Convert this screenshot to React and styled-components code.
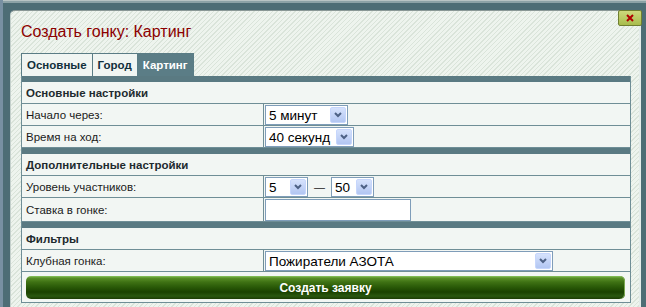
import React from "react";
import styled, { createGlobalStyle } from "styled-components";

const GlobalStyle = createGlobalStyle`
  html, body {
    margin: 0;
    padding: 0;
    background: #4d6d75;
  }
  body {
    font-family: "Liberation Sans", Arial, sans-serif;
  }
`;

const Frame = styled.div`
  position: relative;
  width: 646px;
  height: 307px;
  overflow: hidden;
  box-sizing: border-box;
  padding: 10px 5px 0 10px;
  background: linear-gradient(to right, #7890a2 0 3px, transparent 3px),
    linear-gradient(#b8c4c4 0 1px, #8ca2a6 1px 3px, #4d6d75 3px);
`;

const Panel = styled.div`
  height: 100%;
  box-sizing: border-box;
  border-top: 1px solid #8a9896;
  border-left: 1px solid #c4d0cc;
  border-right: 2px solid #e4ecea;
  border-top-left-radius: 5px;
  padding: 0 8px 0 10px;
  background: repeating-linear-gradient(
    135deg,
    #eef4ee 0 2.2px,
    #dae4da 2.2px 3.2px
  );
`;

const CloseButton = styled.div`
  position: absolute;
  top: 10px;
  right: 4px;
  width: 24px;
  height: 16px;
  box-sizing: border-box;
  border: 1px solid #6f7f30;
  border-radius: 2px;
  background: linear-gradient(#cdd87c, #a8bc4c);
  display: flex;
  align-items: center;
  justify-content: center;
`;

const Title = styled.h1`
  margin: 0;
  padding-top: 11px;
  height: 42px;
  box-sizing: border-box;
  font: normal 16px/19px "Liberation Sans", Arial, sans-serif;
  color: #8c0000;
`;

const Tabs = styled.div`
  display: flex;
  height: 23px;
`;

const Tab = styled.div`
  display: flex;
  align-items: center;
  padding: 0 5px;
  box-sizing: border-box;
  border: 1px solid #5a7c85;
  border-bottom: none;
  margin-right: -1px;
  font: bold 11.5px "Liberation Sans", Arial, sans-serif;
  background: ${({ active }) => (active ? "#5b7d86" : "#f0f5f2")};
  color: ${({ active }) => (active ? "#ffffff" : "#12303c")};
`;

const Table = styled.div`
  width: 610px;
  box-sizing: border-box;
  background: #f2f6f3;
  border: 1px solid #6f8e96;
  border-top: none;
`;

const SectionBar = styled.div`
  height: 6px;
  background: #5a7a82;
`;

const SectionHead = styled.div`
  height: 21px;
  display: flex;
  align-items: center;
  padding-left: 4px;
  border-bottom: 1px solid #6f8e96;
  font: bold 11.5px "Liberation Sans", Arial, sans-serif;
  color: #1e2a2e;
`;

const Row = styled.div`
  display: grid;
  grid-template-columns: 242px 1fr;
  border-bottom: 1px solid #6f8e96;
`;

const Label = styled.div`
  display: flex;
  align-items: center;
  padding-left: 4px;
  border-right: 1px solid #6f8e96;
  font: 11.5px "Liberation Sans", Arial, sans-serif;
  color: #1a1a1a;
`;

const Value = styled.div`
  display: flex;
  align-items: center;
  gap: 6px;
  padding: 1px 0 0 1px;
  min-height: 21px;
  box-sizing: border-box;
`;

const SelectBox = styled.div`
  width: ${({ w }) => w}px;
  height: 20px;
  box-sizing: border-box;
  border: 1px solid #7f9db9;
  background: #fff;
  display: flex;
  align-items: center;
  justify-content: space-between;
  padding: 0 1px 0 3px;
  font: 13.5px "Liberation Sans", Arial, sans-serif;
  color: #000;
`;

const Arrow = styled.span`
  width: 16px;
  height: 16px;
  box-sizing: border-box;
  border: 1px solid #c6d6fc;
  border-radius: 2px;
  background: linear-gradient(#d6e2fc, #b2c6f2);
  display: flex;
  align-items: center;
  justify-content: center;
`;

const Dash = styled.span`
  font: 11px "Liberation Sans", Arial, sans-serif;
  color: #222;
`;

const TextInput = styled.div`
  width: 146px;
  height: 22px;
  box-sizing: border-box;
  border: 1px solid #7f9db9;
  background: #fff;
`;

const ButtonRow = styled.div`
  padding: 4px 5px 3px 4px;
`;

const SubmitButton = styled.button`
  display: block;
  width: 100%;
  height: 23px;
  border: none;
  border-radius: 5px;
  padding: 0;
  background: linear-gradient(
    #8cc860 0,
    #5a9028 2px,
    #3f7214 6px,
    #2a5a08 11px,
    #1a4200 16px,
    #2a5810 20px,
    #1c3c04 23px
  );
  box-shadow: inset -1px 0 0 #7aa850;
  color: #fff;
  font: bold 12px "Liberation Sans", Arial, sans-serif;
  cursor: pointer;
`;

function Select({ w, children }) {
  return (
    <SelectBox w={w}>
      <span>{children}</span>
      <Arrow>
        <svg width="8" height="6" viewBox="0 0 8 6">
          <path d="M1 1 L4 4 L7 1" fill="none" stroke="#4d6185" strokeWidth="2" />
        </svg>
      </Arrow>
    </SelectBox>
  );
}

export default function App() {
  return (
    <Frame>
      <GlobalStyle />
      <CloseButton>
        <svg width="8" height="8" viewBox="0 0 8 8">
          <path d="M1 1 L7 7 M7 1 L1 7" stroke="#b00000" strokeWidth="2" />
        </svg>
      </CloseButton>
      <Panel>
        <Title>Создать гонку: Картинг</Title>
        <Tabs>
          <Tab>Основные</Tab>
          <Tab>Город</Tab>
          <Tab active>Картинг</Tab>
        </Tabs>
        <Table>
          <SectionBar />
          <SectionHead>Основные настройки</SectionHead>
          <Row>
            <Label>Начало через:</Label>
            <Value>
              <Select w={83}>5 минут</Select>
            </Value>
          </Row>
          <Row>
            <Label>Время на ход:</Label>
            <Value>
              <Select w={89}>40 секунд</Select>
            </Value>
          </Row>

          <SectionBar />
          <SectionHead>Дополнительные настройки</SectionHead>
          <Row>
            <Label>Уровень участников:</Label>
            <Value>
              <Select w={43}>5</Select>
              <Dash>—</Dash>
              <Select w={43}>50</Select>
            </Value>
          </Row>
          <Row>
            <Label>Ставка в гонке:</Label>
            <Value>
              <TextInput />
            </Value>
          </Row>

          <SectionBar />
          <SectionHead>Фильтры</SectionHead>
          <Row>
            <Label>Клубная гонка:</Label>
            <Value>
              <Select w={288}>Пожиратели АЗОТА</Select>
            </Value>
          </Row>
          <ButtonRow>
            <SubmitButton>Создать заявку</SubmitButton>
          </ButtonRow>
        </Table>
      </Panel>
    </Frame>
  );
}
